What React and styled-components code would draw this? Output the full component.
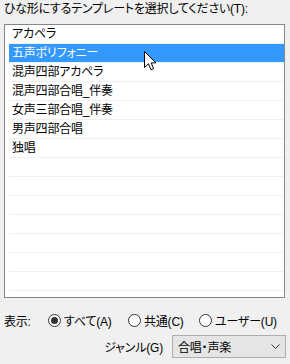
import React from 'react';
import styled, { createGlobalStyle } from 'styled-components';

const GlobalStyle = createGlobalStyle`
  html, body {
    margin: 0;
    padding: 0;
    background: #f0f0f0;
  }
  body {
    font-family: "Liberation Sans", "Noto Sans CJK JP", sans-serif;
    font-size: 12px;
    color: #000000;
    font-feature-settings: "palt";
    letter-spacing: -0.2px;
  }
`;

const Dialog = styled.div`
  position: relative;
  width: 290px;
  height: 364px;
  background: #f0f0f0;
  overflow: hidden;
`;

const Title = styled.div`
  height: 18px;
  line-height: 18px;
  padding-left: 4px;
  white-space: nowrap;
`;

const ListBox = styled.div`
  margin: 6px 0 0 4px;
  width: 281px;
  height: 274px;
  box-sizing: border-box;
  border: 1px solid #828790;
  background: #ffffff;
  overflow: hidden;
`;

const Row = styled.div`
  margin-left: 4px;
  height: 18px;
  line-height: 18px;
  padding-left: 3px;
  border-bottom: 1px solid #efefef;
  white-space: nowrap;
  background: ${(p) => (p.$selected ? '#3399ff' : 'transparent')};
  color: ${(p) => (p.$selected ? '#ffffff' : '#000000')};
`;

const RadioLine = styled.div`
  display: flex;
  align-items: center;
  height: 20px;
  margin-top: 12px;
  padding-left: 4px;
`;

const RadioLabel = styled.div`
  width: 44px;
  white-space: nowrap;
`;

const Option = styled.div`
  display: flex;
  align-items: center;
  gap: 3px;
  width: ${(p) => p.$width}px;
  white-space: nowrap;
`;

const Circle = styled.span`
  position: relative;
  width: 13px;
  height: 13px;
  box-sizing: border-box;
  border: 1px solid #333333;
  border-radius: 50%;
  background: #ffffff;
  flex: none;

  &::after {
    content: '';
    display: ${(p) => (p.$checked ? 'block' : 'none')};
    position: absolute;
    left: 2px;
    top: 2px;
    width: 7px;
    height: 7px;
    border-radius: 50%;
    background: #333333;
  }
`;

const GenreLine = styled.div`
  display: flex;
  align-items: center;
  justify-content: flex-end;
  gap: 9px;
  margin-top: 5px;
  padding-right: 4px;
`;

const Combo = styled.div`
  display: flex;
  align-items: center;
  justify-content: space-between;
  width: 114px;
  height: 23px;
  box-sizing: border-box;
  border: 1px solid #adadad;
  background: #e5e5e5;
  padding: 0 5px 0 5px;
`;

const Cursor = styled.svg`
  position: absolute;
  left: 144px;
  top: 51px;
`;

const items = [
  'アカペラ',
  '五声ポリフォニー',
  '混声四部アカペラ',
  '混声四部合唱_伴奏',
  '女声三部合唱_伴奏',
  '男声四部合唱',
  '独唱',
];

function App() {
  const rows = [...items, ...Array(14 - items.length).fill('')];
  return (
    <Dialog>
      <GlobalStyle />
      <Title>ひな形にするテンプレートを選択してください(T):</Title>
      <ListBox>
        {rows.map((t, i) => (
          <Row key={i} $selected={i === 1}>
            {t}
          </Row>
        ))}
      </ListBox>
      <RadioLine>
        <RadioLabel>表示:</RadioLabel>
        <Option $width={80}>
          <Circle $checked />
          すべて(A)
        </Option>
        <Option $width={71}>
          <Circle />
          共通(C)
        </Option>
        <Option $width={70}>
          <Circle />
          ユーザー(U)
        </Option>
      </RadioLine>
      <GenreLine>
        <span>ジャンル(G)</span>
        <Combo>
          <span>合唱・声楽</span>
          <svg width="9" height="6" viewBox="0 0 9 6">
            <path d="M0.5 0.5 L4.5 4.5 L8.5 0.5" fill="none" stroke="#333" strokeWidth="1" />
          </svg>
        </Combo>
      </GenreLine>
      <Cursor width="13" height="21" viewBox="0 0 13 21">
        <path
          d="M0.5 0.5 L0.5 16.5 L4.5 12.8 L7 18.8 L9.6 17.7 L7.2 11.9 L12 11.9 Z"
          fill="#ffffff"
          stroke="#000000"
          strokeWidth="1"
          strokeLinejoin="miter"
        />
      </Cursor>
    </Dialog>
  );
}

export default App;
